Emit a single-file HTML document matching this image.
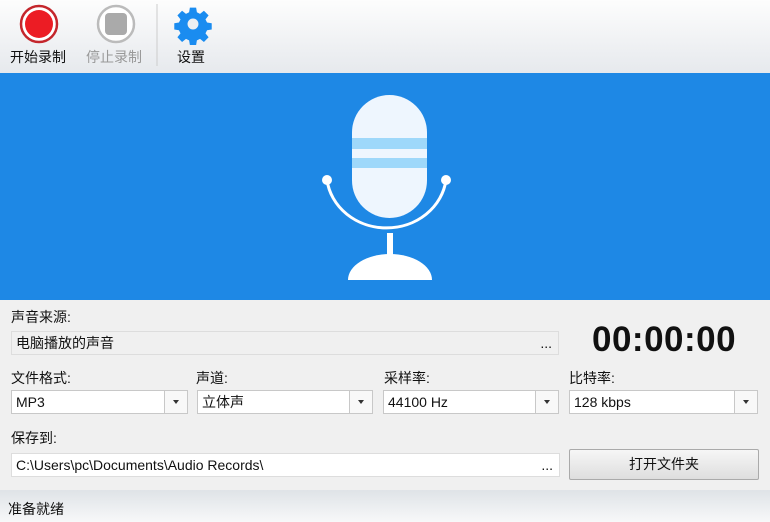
<!DOCTYPE html>
<html><head><meta charset="utf-8"><style>
body{margin:0;width:770px;height:522px;overflow:hidden;background:#f0f0f0;font-family:"Liberation Sans","Noto Sans CJK SC",sans-serif;font-size:14px;color:#111;position:relative}
.a{position:absolute}
.tb{left:0;top:0;width:770px;height:73px;background:linear-gradient(#fdfdfd,#e6e9ed);border-bottom:1px solid #d0d4d8}
.lbl{font-size:14px}
.box{background:#fff;border:1px solid #c8c8c8;height:24px;box-sizing:border-box;line-height:22px;padding-left:4px}
.dd{position:absolute;right:0;top:0;width:22px;height:22px;border-left:1px solid #c8c8c8;background:#f8f8f8}
.dd:after{content:"";position:absolute;left:8px;top:9px;border:3px solid transparent;border-top:4px solid #333}
</style></head><body>
<div class="a tb"></div>
<svg class="a" style="left:0;top:0" width="230" height="73">
<circle cx="39" cy="24" r="18" fill="#fff" stroke="#c4262c" stroke-width="2.5"/>
<circle cx="39" cy="24" r="14" fill="#ec1c24"/>
<circle cx="116" cy="24" r="18" fill="#fff" stroke="#bbb" stroke-width="2.5"/>
<rect x="105" y="13" width="22" height="22" rx="4" fill="#aaa"/>
<line x1="157" y1="4" x2="157" y2="66" stroke="#ccc"/>
<g transform="translate(193,24) scale(0.78)" fill="#1a8cf0">
<path d="M-4,-21h8l1,6 4,2 5,-4 6,6 -4,5 2,4 6,1v8l-6,1 -2,4 4,5 -6,6 -5,-4 -4,2 -1,6h-8l-1,-6 -4,-2 -5,4 -6,-6 4,-5 -2,-4 -6,-1v-8l6,-1 2,-4 -4,-5 6,-6 5,4 4,-2z"/>
<circle r="7" fill="#eef0f2"/>
</g>
</svg>
<div class="a" style="left:10px;top:47px;font-size:14px">开始录制</div>
<div class="a" style="left:86px;top:47px;font-size:14px;color:#999">停止录制</div>
<div class="a" style="left:177px;top:47px;font-size:14px">设置</div>
<div class="a" style="left:0;top:73px;width:770px;height:227px;background:#1e88e5"></div>
<svg class="a" style="left:300px;top:85px" width="170" height="200">
<path d="M27,95 A60,55 0 0 0 146,95" fill="none" stroke="#fff" stroke-width="3"/>
<circle cx="27" cy="95" r="5" fill="#fff"/><circle cx="146" cy="95" r="5" fill="#fff"/>
<rect x="52" y="10" width="75" height="123" rx="37.5" fill="#eef6fe"/>
<rect x="52" y="53" width="75" height="11" fill="#9ed8fa"/>
<rect x="52" y="73" width="75" height="10" fill="#9ed8fa"/>
<rect x="87" y="148" width="6" height="25" fill="#fff"/>
<path d="M48,195 A42,26 0 0 1 132,195Z" fill="#fff"/>
</svg>
<div class="a lbl" style="left:11px;top:307px">声音来源:</div>
<div class="a box" style="left:11px;top:331px;width:548px;background:#f0f0f0;border-color:#ddd">电脑播放的声音<span class="a" style="right:6px;top:0">...</span></div>
<div class="a" style="left:592px;top:320px;font-size:35px;font-weight:bold;letter-spacing:0.5px">00:00:00</div>
<div class="a lbl" style="left:11px;top:368px">文件格式:</div>
<div class="a lbl" style="left:196px;top:368px">声道:</div>
<div class="a lbl" style="left:384px;top:368px">采样率:</div>
<div class="a lbl" style="left:569px;top:368px">比特率:</div>
<div class="a box" style="left:11px;top:390px;width:177px">MP3<div class="dd"></div></div>
<div class="a box" style="left:197px;top:390px;width:176px">立体声<div class="dd"></div></div>
<div class="a box" style="left:383px;top:390px;width:176px">44100 Hz<div class="dd"></div></div>
<div class="a box" style="left:569px;top:390px;width:189px">128 kbps<div class="dd"></div></div>
<div class="a lbl" style="left:11px;top:428px">保存到:</div>
<div class="a box" style="left:11px;top:453px;width:549px;border-color:#ddd">C:\Users\pc\Documents\Audio Records\<span class="a" style="right:6px;top:0">...</span></div>
<div class="a" style="left:569px;top:449px;width:190px;height:31px;box-sizing:border-box;border:1px solid #aaa;border-radius:2px;background:linear-gradient(#f6f6f6,#dedede);text-align:center;line-height:29px">打开文件夹</div>
<div class="a" style="left:0;top:490px;width:770px;height:32px;background:linear-gradient(#dfe3e7,#f7f8f9)"></div>
<div class="a" style="left:8px;top:499px;font-size:14px">准备就绪</div>
</body></html>
